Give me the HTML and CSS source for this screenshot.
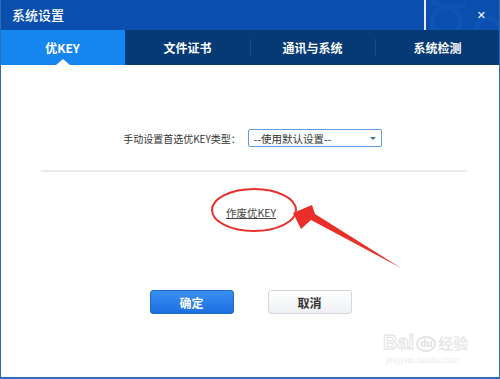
FILE: index.html
```html
<!DOCTYPE html>
<html>
<head>
<meta charset="utf-8">
<link rel="stylesheet" href="styles.css">
</head>
<body>
<div class="window">
  <div class="titlebar">
    <div class="title">系统设置</div>
    <div class="close-area">
      <svg class="deco" width="75" height="30" viewBox="0 0 75 30">
        <circle cx="20" cy="22" r="14" fill="none" stroke="#0d54b3" stroke-width="5"/>
        <path d="M5 0 Q20 12 40 4" fill="none" stroke="#0d54b3" stroke-width="5"/>
        <circle cx="62" cy="30" r="12" fill="none" stroke="#0d54b3" stroke-width="5"/>
      </svg>
      <span class="close">✕</span>
    </div>
  </div>
  <div class="tabs">
    <div class="tab active">优KEY</div>
    <div class="tab">文件证书</div>
    <div class="tab sep">通讯与系统</div>
    <div class="tab sep">系统检测</div>
  </div>
  <div class="content">
    <div class="row">
      <span class="label">手动设置首选优KEY类型：</span>
      <div class="select">
        <span>--使用默认设置--</span>
        <span class="caret"></span>
      </div>
    </div>
    <div class="divider"></div>
    <a class="link">作废优KEY</a>
    <div class="buttons">
      <button class="btn primary">确定</button>
      <button class="btn">取消</button>
    </div>
  </div>
  <svg class="annot" width="500" height="379" viewBox="0 0 500 379">
    <ellipse cx="254" cy="210" rx="42" ry="21" fill="none" stroke="#e8302c" stroke-width="2"/>
    <polygon points="293,213 312,205 315,214 401,268 311,220 301,229" fill="#ea2e2a"/>
  </svg>
  <div class="watermark">
    <div class="wm-top"><span class="bai">Bai</span><span class="paw">du</span><span class="jy">经验</span></div>
    <div class="wm-url">jingyan.baidu.com</div>
  </div>
</div>
</body>
</html>
```
FILE: styles.css
```css
* { box-sizing: border-box; }
html, body { margin: 0; padding: 0; }
body {
  width: 500px;
  height: 379px;
  background: #fff;
  font-family: "Noto Sans CJK SC", "Noto Sans", sans-serif;
}
.window {
  position: relative;
  width: 500px;
  height: 379px;
  border-left: 1px solid #2b6db8;
  border-right: 1px solid #2b6db8;
  border-bottom: 2px solid #2b6db8;
  display: flex;
  flex-direction: column;
  overflow: hidden;
}
.titlebar {
  height: 30px;
  background: #0a4fae;
  display: flex;
  justify-content: space-between;
  margin-left: -1px;
  margin-right: -1px;
}
.title {
  color: #fff;
  font-size: 13px;
  line-height: 30px;
  padding-left: 12px;
  font-weight: 500;
}
.close-area {
  position: relative;
  width: 76px;
  height: 30px;
  border-left: 2px solid #e8eef8;
  display: flex;
  align-items: center;
  justify-content: flex-end;
  padding-right: 14px;
}
.deco { position: absolute; left: 0; top: 0; }
.close {
  position: relative;
  color: #fff;
  font-size: 11px;
  font-weight: 900;
  font-family: "DejaVu Sans", sans-serif;
}
.tabs {
  height: 35px;
  background: #053a74;
  display: flex;
  margin-left: -1px;
  margin-right: -1px;
}
.tab {
  width: 125px;
  color: #fff;
  font-size: 12px;
  font-weight: bold;
  display: flex;
  align-items: center;
  justify-content: center;
  position: relative;
}
.tab.sep::before {
  content: "";
  position: absolute;
  left: 0;
  top: 9px;
  height: 17px;
  width: 1px;
  background: #1c4f86;
}
.tab.active {
  background: #1585f0;
}
.tab.active::after {
  content: "";
  position: absolute;
  left: 56px;
  bottom: 0;
  border-left: 7px solid transparent;
  border-right: 7px solid transparent;
  border-bottom: 6px solid #fff;
}
.content {
  flex: 1;
  display: flex;
  flex-direction: column;
  align-items: center;
}
.row {
  margin-top: 64px;
  display: flex;
  align-items: center;
  gap: 7px;
  padding-left: 5px;
}
.label {
  font-size: 10px;
  color: #333;
}
.select {
  width: 134px;
  height: 18px;
  border: 1px solid #5d9de0;
  border-radius: 2px;
  font-size: 10.5px;
  color: #333;
  display: flex;
  align-items: center;
  justify-content: space-between;
  padding: 0 5px 0 5px;
}
.caret {
  width: 0;
  height: 0;
  border-left: 3px solid transparent;
  border-right: 3px solid transparent;
  border-top: 3px solid #3b6fb0;
}
.divider {
  align-self: stretch;
  height: 2px;
  background: #e7eaee;
  margin: 23px 32px 0 40px;
}
.link {
  margin-top: 33px;
  font-size: 10.5px;
  color: #444;
  text-decoration: underline;
  padding-left: 2px;
}
.buttons {
  margin-top: 70px;
  display: flex;
  gap: 34px;
  padding-left: 1px;
}
.btn {
  width: 84px;
  height: 24px;
  border-radius: 3px;
  font-family: "Noto Sans CJK SC", sans-serif;
  font-size: 12px;
  font-weight: bold;
  border: 1px solid #d4d8de;
  background: linear-gradient(#ffffff, #eef0f3);
  color: #333;
  padding: 0;
}
.btn.primary {
  border-color: #1f67c9;
  background: linear-gradient(#3a90f2, #1b6fe0);
  color: #fff;
}
.annot {
  position: absolute;
  left: -1px;
  top: 0;
  pointer-events: none;
}
.watermark {
  position: absolute;
  left: 382px;
  top: 328px;
  color: #ececec;
  font-family: "Liberation Sans", sans-serif;
}
.wm-top {
  display: flex;
  align-items: flex-end;
  gap: 2px;
  height: 24px;
}
.bai {
  font-size: 20px;
  font-weight: bold;
  line-height: 20px;
  -webkit-text-stroke: 1px #e2e2e2;
  color: #fff;
}
.paw {
  font-size: 10px;
  font-weight: bold;
  border: 2px solid #e4e4e4;
  border-radius: 50%;
  padding: 1px 2px;
  color: #e0e0e0;
  line-height: 10px;
}
.jy {
  font-family: "Noto Sans CJK SC", sans-serif;
  font-size: 15px;
  font-weight: bold;
  line-height: 18px;
  color: #e8e8e8;
}
.wm-url {
  font-size: 9px;
  color: #ececec;
  margin-top: 3px;
  padding-left: 3px;
}
```
